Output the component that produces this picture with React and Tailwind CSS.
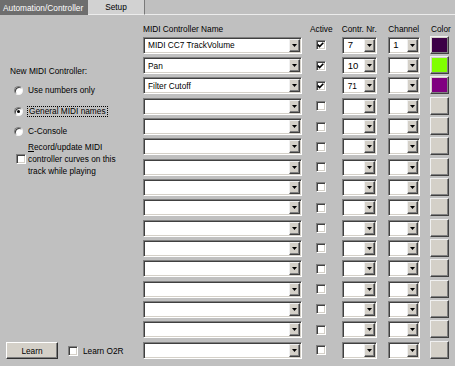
import React from 'react';

const rows = [
  { name: 'MIDI CC7 TrackVolume', active: true, nr: '7', ch: '1', color: 'bg-[#3c0046]', nrCls: 'text-[9.5px]' },
  { name: 'Pan', active: true, nr: '10', ch: '', color: 'bg-[#80ff00]', nrCls: 'text-[9.5px]' },
  { name: 'Filter Cutoff', active: true, nr: '71', ch: '', color: 'bg-[#800080]', nrCls: 'text-[8.3px]' },
  ...Array.from({ length: 13 }, () => ({ name: '', active: false, nr: '', ch: '', color: 'bg-[#d4d0c8]', nrCls: '' })),
];

const DropBtn = () => (
  <div className="w-[11px] h-full shrink-0 bg-[#d4d0c8] border border-t-[#f0f0f0] border-l-[#f0f0f0] border-b-[#404040] border-r-[#404040] shadow-[inset_-1px_-1px_0_#808080] flex items-center justify-center">
    <svg width="5" height="3" viewBox="0 0 5 3">
      <path d="M0 0h5L2.5 3z" fill="#000" />
    </svg>
  </div>
);

const Combo = ({ w, value, textCls = '' }) => (
  <div className={`${w} h-[17px] flex bg-white border border-t-[#808080] border-l-[#808080] border-b-white border-r-white shadow-[inset_1px_1px_0_#404040,inset_-1px_-1px_0_#d4d0c8] p-[1px]`}>
    <div className={`flex-1 min-w-0 pl-[3px] flex items-center overflow-hidden whitespace-nowrap ${textCls}`}>{value}</div>
    <DropBtn />
  </div>
);

const Check = ({ checked }) => (
  <div className="w-[10px] h-[10px] bg-white border border-t-[#808080] border-l-[#808080] border-b-white border-r-white shadow-[inset_1px_1px_0_#404040,inset_-1px_-1px_0_#d4d0c8] flex items-center justify-center">
    {checked && (
      <svg width="7" height="6" viewBox="0 0 7 6">
        <polyline points="0.8,2.6 2.6,4.6 6.3,0.8" fill="none" stroke="#000" strokeWidth="1.6" />
      </svg>
    )}
  </div>
);

const Radio = ({ checked }) => (
  <div className="w-[9px] h-[9px] rounded-full bg-white border border-t-[#808080] border-l-[#808080] border-b-[#f4f4f4] border-r-[#f4f4f4] shadow-[inset_1px_1px_0_#404040] flex items-center justify-center">
    {checked && <div className="w-[3px] h-[3px] rounded-full bg-black" />}
  </div>
);

export default function App() {
  return (
    <div className="w-[455px] h-[366px] bg-[#c0c0c0] overflow-hidden font-['Liberation_Sans',Arial,sans-serif] text-[8.3px] leading-[10px] text-black">
      {/* tabs */}
      <div className="h-[15px] flex">
        <div className="w-[88px] h-[15px] bg-[#6e6e6e] text-white pl-[3px] flex items-center">Automation/Controller</div>
        <div className="w-[57px] h-[15px] bg-[#d2d2d2] border-r border-r-[#7a7a7a] border-b border-b-[#ececec] flex items-center justify-center">Setup</div>
        <div className="flex-1 border-b border-b-[#ececec]" />
      </div>

      <div className="flex h-[351px]">
        {/* left panel */}
        <div className="w-[143px] flex flex-col pb-[7px]">
          <div className="mt-[51px] pl-[10px]">New MIDI Controller:</div>
          <div className="mt-[9px] flex items-center pl-[14px] h-[10px]">
            <Radio />
            <span className="ml-[5px]">Use numbers only</span>
          </div>
          <div className="mt-[11px] flex items-center pl-[14px] h-[10px]">
            <Radio checked />
            <span className="ml-[4px] border border-dotted border-black px-[1px] leading-[9px]">General MIDI names</span>
          </div>
          <div className="mt-[10px] flex items-center pl-[14px] h-[10px]">
            <Radio />
            <span className="ml-[5px]">C-Console</span>
          </div>
          <div className="mt-[5px] flex items-center pl-[16px]">
            <Check />
            <div className="ml-[2px] leading-[12px]">
              <div><span className="underline">R</span>ecord/update MIDI</div>
              <div>controller curves on this</div>
              <div>track while playing</div>
            </div>
          </div>
          <div className="mt-auto flex items-center pl-[6px]">
            <button className="w-[52px] h-[17px] bg-[#d4d0c8] border border-t-white border-l-white border-b-[#303030] border-r-[#303030] shadow-[inset_-1px_-1px_0_#808080] flex items-center justify-center">
              Learn
            </button>
            <div className="ml-[10px]">
              <Check />
            </div>
            <span className="ml-[5px]">Learn O2R</span>
          </div>
        </div>

        {/* controller table */}
        <div className="flex flex-col">
          <div className="mt-[9px] h-[10px] flex">
            <div className="w-[159px]">MIDI Controller Name</div>
            <div className="w-[39.7px] pl-[8px]">Active</div>
            <div className="w-[46.6px]">Contr. Nr.</div>
            <div className="w-[41.7px]">Channel</div>
            <div className="pl-[1px]">Color</div>
          </div>
          <div className="mt-[2.7px] grid grid-rows-[repeat(16,20.33px)]">
            {rows.map((r, i) => (
              <div key={i} className="flex items-start">
                <Combo w="w-[159px]" value={r.name} />
                <div className="w-[39.7px] h-[17px] flex items-center pl-[13.5px]">
                  <Check checked={r.active} />
                </div>
                <Combo w="w-[35px]" value={r.nr} textCls={`${r.nrCls} pl-[4px]`} />
                <div className="w-[11.6px]" />
                <Combo w="w-[31.7px]" value={r.ch} textCls="text-[9.5px] pl-[2px]" />
                <div className="w-[10px]" />
                <div className="w-[19px] h-[18px] -mt-[1px] bg-[#d4d0c8] border border-t-[#f0f0f0] border-l-[#f0f0f0] border-b-[#404040] border-r-[#404040] shadow-[inset_-1px_-1px_0_#808080] p-[1px]">
                  <div className={`w-full h-full ${r.color}`} />
                </div>
              </div>
            ))}
          </div>
        </div>
      </div>
    </div>
  );
}
